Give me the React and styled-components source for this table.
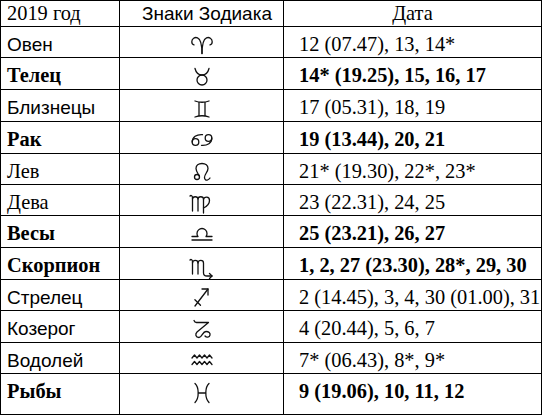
import React from 'react'
import styled, { createGlobalStyle } from 'styled-components'

const GlobalStyle = createGlobalStyle`
  html, body {
    margin: 0;
    padding: 0;
    background: #ffffff;
  }
`

const SERIF = `"Liberation Serif", "Times New Roman", serif`
const SANS = `"Liberation Sans", Arial, sans-serif`

// знаки зодиака — рисуем сами, в пиксельных координатах 26x24
const SIGNS = {
  aries: (
    <>
      <path d="M13 18.5 C13 11 12.5 4.5 8.5 2.8 C5.8 1.8 2.8 3.5 2.8 6.8 C2.8 8.5 3.8 9.6 5 9.8" />
      <path d="M13 18.5 C13 11 13.5 4.5 17.5 2.8 C20.2 1.8 23.2 3.5 23.2 6.8 C23.2 8.5 22.2 9.6 21 9.8" />
    </>
  ),
  taurus: (
    <>
      <circle cx="13" cy="14" r="5" />
      <path d="M6 2.5 C7 6.5 9.5 9 13 9 C16.5 9 19 6.5 20 2.5" />
    </>
  ),
  gemini: (
    <>
      <path d="M6 3 Q13 5.5 20 3" />
      <path d="M6 19 Q13 16.5 20 19" />
      <path d="M10 4.3 V17.7 M16 4.3 V17.7" />
    </>
  ),
  cancer: (
    <>
      <circle cx="6.5" cy="12" r="3.3" />
      <path d="M3.2 12 C3.2 6.8 7.5 4.2 13.5 4.6" />
      <circle cx="19.5" cy="8" r="3.3" />
      <path d="M22.8 8 C22.8 13.2 18.5 15.8 12.5 15.4" />
    </>
  ),
  leo: (
    <>
      <circle cx="8" cy="15" r="2.5" />
      <path d="M10.3 14 C8.5 11 7 9 7 6.5 C7 3.5 9.5 1.5 13 1.5 C16.5 1.5 19 3.5 19 6.5 C19 10 15.5 12 15.5 15.5 C15.5 17.5 17 18.5 18.5 18 C19.5 17.6 20.5 16.8 21 16" />
    </>
  ),
  virgo: (
    <>
      <path d="M1 3 C2 2 3.5 2.5 3.5 5 V18" />
      <path d="M3.5 6 C3.5 3 9 3 9 6 V18" />
      <path d="M9 6 C9 3 14.5 3 14.5 6 V20" />
      <path d="M14.5 6.5 C15 3.5 20.5 3 20.5 7.5 C20.5 11.5 17.5 13.5 14.5 15" />
    </>
  ),
  libra: (
    <>
      <path d="M3 16 H23" />
      <path d="M3 12.5 H9 C8 11.5 8 10.5 8 9.5 C8 6.5 10.5 4.5 13 4.5 C15.5 4.5 18 6.5 18 9.5 C18 10.5 18 11.5 17 12.5 H23" />
    </>
  ),
  scorpio: (
    <>
      <path d="M1 4 C2 3 3.5 3.5 3.5 6 V18" />
      <path d="M3.5 7 C3.5 3.5 9 3.5 9 7 V18" />
      <path d="M9 7 C9 3.5 14.5 3.5 14.5 7 V17 C14.5 19 16 20 18 20 H23" />
      <path d="M20.5 17.5 L23 20 L20.5 22.5" />
    </>
  ),
  sagittarius: (
    <>
      <path d="M6 18 L19 1" />
      <path d="M13 1 H19 V7" />
      <path d="M5.9 11.7 L11.5 17.3" />
    </>
  ),
  capricorn: (
    <>
      <path d="M5 1.5 C5.5 3 6.5 3.5 7.5 3.5 H19.5 L8 13 C6 15 6.5 18.5 10 18.5 C13 18.5 13.5 12.5 17 12.5 C19.8 12.5 21.5 14 21 16.2 C20.5 18.4 17.5 18.8 16 17" />
    </>
  ),
  aquarius: (
    <>
      <path d="M3 7 L5.5 4 L8 7 L10.5 4 L13 7 L15.5 4 L18 7 L20.5 4 L23 7" />
      <path d="M3 13.5 L5.5 10.5 L8 13.5 L10.5 10.5 L13 13.5 L15.5 10.5 L18 13.5 L20.5 10.5 L23 13.5" />
    </>
  ),
  pisces: (
    <>
      <path d="M6 1.5 C10 5 10.5 16 6 20.5" />
      <path d="M20 1.5 C16 5 15.5 16 20 20.5" />
      <path d="M9.5 11 H16.5" />
    </>
  ),
}

const ROWS = [
  { name: 'Овен', sans: true, sign: 'aries', date: '12 (07.47), 13, 14*', h: 31 },
  { name: 'Телец', bold: true, sign: 'taurus', date: '14* (19.25), 15, 16, 17', h: 32 },
  { name: 'Близнецы', sans: true, sign: 'gemini', date: '17 (05.31), 18, 19', h: 32 },
  { name: 'Рак', bold: true, sign: 'cancer', date: '19 (13.44), 20, 21', h: 32 },
  { name: 'Лев', sign: 'leo', date: '21* (19.30), 22*, 23*', h: 31 },
  { name: 'Дева', sign: 'virgo', date: '23 (22.31), 24, 25', h: 31 },
  { name: 'Весы', bold: true, sign: 'libra', date: '25 (23.21), 26, 27', h: 32 },
  { name: 'Скорпион', bold: true, sign: 'scorpio', date: '1, 2, 27 (23.30), 28*, 29, 30', h: 32 },
  { name: 'Стрелец', sans: true, sign: 'sagittarius', date: '2 (14.45), 3, 4, 30 (01.00), 31', h: 31 },
  { name: 'Козерог', sans: true, sign: 'capricorn', date: '4 (20.44), 5, 6, 7', h: 32 },
  { name: 'Водолей', sans: true, sign: 'aquarius', date: '7* (06.43), 8*, 9*', h: 31 },
  { name: 'Рыбы', bold: true, sign: 'pisces', date: '9 (19.06), 10, 11, 12', h: 41 },
]

const App = () => {
  return (
    <>
      <GlobalStyle />
      <Table $rows={ROWS.map(r => r.h)}>
        <HeadCell $font={SERIF} $align="left">2019 год</HeadCell>
        <HeadCell $font={SANS} $align="center" $shift={11}>Знаки Зодиака</HeadCell>
        <HeadCell $font={SERIF} $align="center">Дата</HeadCell>
        {ROWS.map(row => (
          <React.Fragment key={row.name}>
            <NameCell $sans={row.sans} $bold={row.bold}>{row.name}</NameCell>
            <SignCell>
              <SignIcon viewBox="0 0 26 24" width="26" height="24">
                {SIGNS[row.sign]}
              </SignIcon>
            </SignCell>
            <DateCell $bold={row.bold}>{row.date}</DateCell>
          </React.Fragment>
        ))}
      </Table>
    </>
  )
}

export default App

const Table = styled.div`
  display: grid;
  grid-template-columns: 119px 164px 258px;
  grid-template-rows: 26px ${props => props.$rows.map(h => `${h}px`).join(' ')};
  width: 542px;
  box-sizing: border-box;
  border-top: 1px solid #000;
  border-left: 1px solid #000;
  color: #000;
`

const Cell = styled.div`
  box-sizing: border-box;
  border-right: 1px solid #000;
  border-bottom: 1px solid #000;
  white-space: nowrap;
  overflow: hidden;
`

const HeadCell = styled(Cell)`
  font-family: ${props => props.$font};
  font-size: ${props => props.$font === SANS ? '19px' : '20.4px'};
  text-align: ${props => props.$align};
  padding: 1px 0 0 ${props => props.$shift || 6}px;
  ${props => props.$align === 'center' && !props.$shift && 'padding-left: 0;'}
  line-height: 23px;
`

const NameCell = styled(Cell)`
  font-family: ${props => props.$sans ? SANS : SERIF};
  font-size: ${props => props.$sans ? '19px' : '20.4px'};
  font-weight: ${props => props.$bold ? 700 : 400};
  padding: 6px 0 0 6px;
  line-height: 23px;
`

const SignCell = styled(Cell)`
  display: flex;
  justify-content: center;
  align-items: flex-start;
  padding-top: 8px;
`

const SignIcon = styled.svg`
  display: block;
  fill: none;
  stroke: #111;
  stroke-width: 1.3;
  stroke-linecap: round;
  stroke-linejoin: round;
`

const DateCell = styled(Cell)`
  font-family: ${SERIF};
  font-size: 20.4px;
  font-weight: ${props => props.$bold ? 700 : 400};
  padding: 6px 0 0 15px;
  line-height: 23px;
`
